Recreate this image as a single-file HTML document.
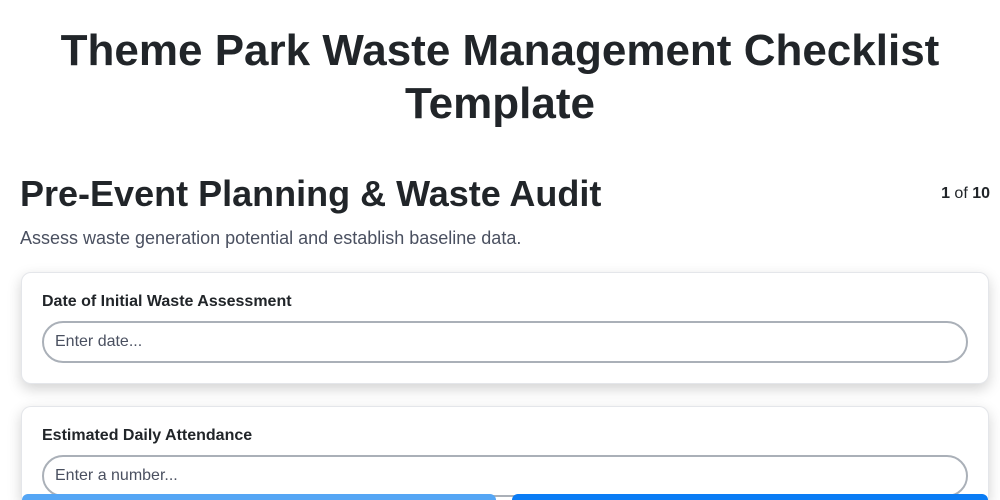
<!DOCTYPE html>
<html style="width:1000px;height:500px;overflow:hidden"><head><meta charset="utf-8"><style>
*{box-sizing:border-box;margin:0;padding:0}
body{width:1000px;height:500px;overflow:hidden;background:#fff;font-family:"Liberation Sans",sans-serif;color:#212529;position:relative}
h1{position:absolute;top:24px;left:0;width:1000px;text-align:center;font-size:44px;line-height:53px;font-weight:bold;color:#212529}
h2{position:absolute;top:172px;left:20px;font-size:36px;font-weight:bold;line-height:44px}
.pg{position:absolute;top:185px;right:10px;font-size:16px}
.sub{position:absolute;top:228px;left:20px;font-size:18px;color:#4a5060}
.card{position:absolute;left:21px;width:968px;height:112px;background:#fff;border:1px solid #e4e6ea;border-radius:10px;box-shadow:0 5px 14px rgba(0,0,0,.18)}
.card label{position:absolute;left:20px;top:20px;font-size:16px;font-weight:bold}
.card .in{position:absolute;left:20px;top:48px;width:926px;height:42px;border:2px solid #aab0b8;border-radius:21px;padding-left:11px;line-height:38px;font-size:16px;color:#4a5060}
.btn{position:absolute;top:494px;height:6px;border-radius:20px 20px 0 0}
</style></head><body>
<h1>Theme Park Waste Management Checklist<br>Template</h1>
<h2>Pre-Event Planning &amp; Waste Audit</h2>
<div class="pg"><b>1</b> of <b>10</b></div>
<div class="sub">Assess waste generation potential and establish baseline data.</div>
<div class="card" style="top:272px"><label>Date of Initial Waste Assessment</label><div class="in">Enter date...</div></div>
<div class="card" style="top:406px;height:94px;border-bottom:none;border-radius:10px 10px 0 0"><label>Estimated Daily Attendance</label><div class="in">Enter a number...</div></div>
<div class="btn" style="left:22px;width:474px;background:#55a6f5"></div>
<div class="btn" style="left:512px;width:476px;background:#0a7cf5"></div>
</body></html>
